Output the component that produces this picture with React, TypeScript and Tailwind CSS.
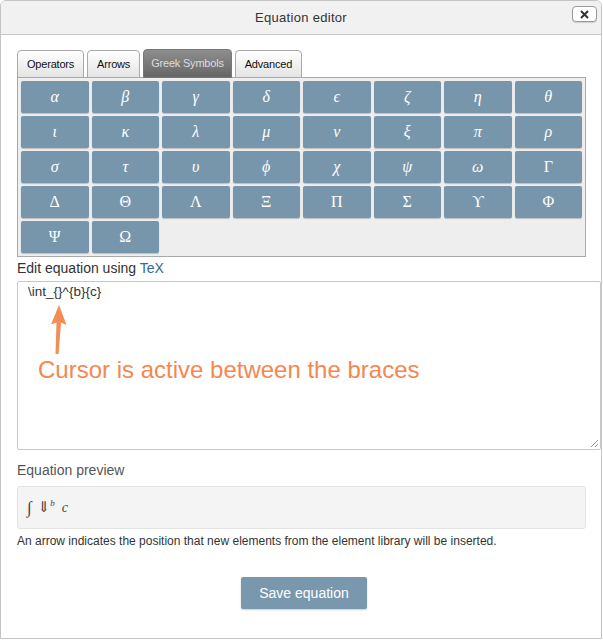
import React from "react";

const rows: string[][] = [
  ["α", "β", "γ", "δ", "ϵ", "ζ", "η", "θ"],
  ["ι", "κ", "λ", "μ", "ν", "ξ", "π", "ρ"],
  ["σ", "τ", "υ", "ϕ", "χ", "ψ", "ω", "Γ"],
  ["Δ", "Θ", "Λ", "Ξ", "Π", "Σ", "ϒ", "Φ"],
  ["Ψ", "Ω"],
];

const tabs = ["Operators", "Arrows", "Greek Symbols", "Advanced"];

function isLower(s: string) {
  return s.toLowerCase() === s && s.toUpperCase() !== s;
}

export default function App() {
  const symbols = rows.flat();
  return (
    <div className="w-[603px] h-[640px] bg-white font-['Liberation_Sans',Arial,sans-serif]">
      <div className="w-[602px] h-[639px] border border-[#c4c4c4] rounded-tl-[6px] rounded-tr-[6px] flex flex-col overflow-hidden">
        {/* Header */}
        <div className="h-[34px] shrink-0 bg-[#f1f1f1] border-b border-[#c6c6c6] flex items-center justify-center relative">
          <span className="text-[13px] text-[#333] tracking-[0.3px]">Equation editor</span>
          <button className="absolute right-[4px] top-[5px] w-[25px] h-[16px] bg-white border border-[#9a9a9a] rounded-[4px] flex items-center justify-center shadow-[0_1px_1px_rgba(0,0,0,0.15)]">
            <svg width="9" height="9" viewBox="0 0 9 9">
              <path d="M1 1L8 8M8 1L1 8" stroke="#333" strokeWidth="2" />
            </svg>
          </button>
        </div>

        <div className="px-[16px] pt-[13px] flex flex-col">
          {/* Tabs */}
          <div className="flex items-end gap-[3px] h-[29px]">
            {tabs.map((t, i) =>
              i === 2 ? (
                <div
                  key={t}
                  className="h-[29px] px-[7px] -mb-px relative flex items-center text-[11px] tracking-[-0.2px] text-[#ddd] rounded-t-[4px] border border-[#777] bg-gradient-to-b from-[#8e8e8e] to-[#666] z-10"
                >
                  {t}
                </div>
              ) : (
                <div
                  key={t}
                  className="h-[28px] px-[9px] -mb-px relative flex items-center text-[11px] tracking-[-0.2px] text-[#111] rounded-t-[4px] border border-[#aaa] bg-gradient-to-b from-white to-[#e4e4e4]"
                >
                  {t}
                </div>
              )
            )}
          </div>

          {/* Symbol panel */}
          <div className="w-[569px] bg-[#eeeeee] border border-[#aaa] p-[3px] pb-[3px]">
            <div className="grid grid-cols-8 gap-[3px]">
              {symbols.map((s, i) => (
                <button
                  key={i}
                  className={
                    "h-[32px] bg-[#7896ab] rounded-[2px] text-white text-[16px] shadow-[0_1px_1px_rgba(0,0,0,0.2)] font-['Liberation_Serif','DejaVu_Serif',serif] " +
                    (isLower(s) ? "italic" : "")
                  }
                >
                  {s}
                </button>
              ))}
            </div>
          </div>

          <div className="mt-[1px] text-[14px] text-[#333] leading-[20px]">
            Edit equation using <span className="text-[#2f6a92]">TeX</span>
          </div>

          {/* Textarea with annotation */}
          <div className="relative mt-[3px] w-[584px] h-[169px] border border-[#c8c8c8] rounded-[2px] bg-white">
            <div className="pl-[10px] pt-[2px] text-[13.5px] leading-[16px] text-[#333] font-['Liberation_Sans',Arial,sans-serif]">
              \int_{"{}"}^{"{b}"}{"{c}"}
            </div>
            <svg className="absolute left-[30px] top-[22px]" width="20" height="52" viewBox="0 0 20 52">
              <path d="M11 1 L18.5 21 L13 18.5 L10.5 50 L7.5 50 L8.5 18.5 L3 20.5 Z" fill="#f58b55" />
            </svg>
            <div className="absolute left-[20px] top-[74px] text-[24px] text-[#f5874f] leading-[28px]">
              Cursor is active between the braces
            </div>
            <svg className="absolute right-[1px] bottom-[1px]" width="9" height="9" viewBox="0 0 9 9">
              <path d="M8 1L1 8M8 5L5 8" stroke="#999" strokeWidth="1" />
            </svg>
          </div>

          <div className="mt-[10px] text-[14px] text-[#555] leading-[20px]">Equation preview</div>

          <div className="mt-[6px] w-[569px] h-[43px] bg-[#f4f4f4] border border-[#e3e3e3] rounded-[3px] flex items-center pl-[9px] text-[#444] font-['Liberation_Serif','DejaVu_Serif',serif]">
            <span className="italic text-[17px]">∫</span>
            <span className="ml-[6px] text-[15px]">⇓</span>
            <span className="italic text-[9px] -mt-[8px]">b</span>
            <span className="ml-[7px] italic text-[14px]">c</span>
          </div>

          <div className="mt-[4px] text-[12px] text-[#333] leading-[16px]">
            An arrow indicates the position that new elements from the element library will be inserted.
          </div>

          <div className="flex justify-center mt-[28px]">
            <button className="w-[126px] h-[32px] bg-[#7a98ad] rounded-[2px] text-white text-[14px] shadow-[0_1px_2px_rgba(0,0,0,0.2)] ml-[6px]">
              Save equation
            </button>
          </div>
        </div>
      </div>
    </div>
  );
}
